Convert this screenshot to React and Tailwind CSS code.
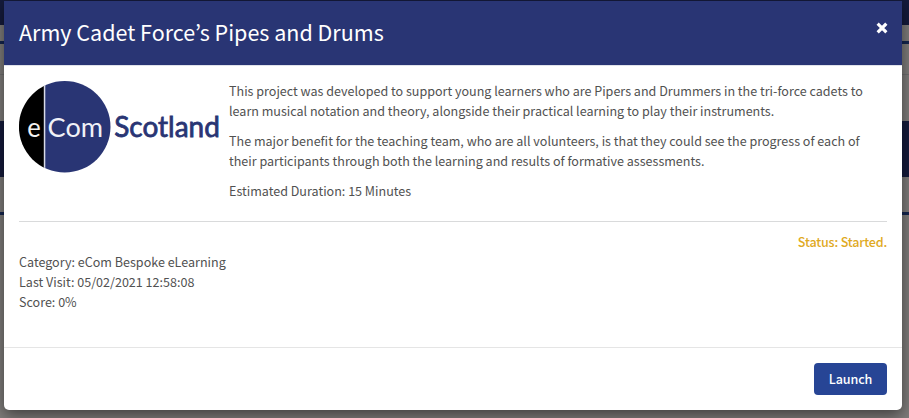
import React from "react";

function Backdrop() {
  return (
    <div className="absolute inset-0 flex flex-col bg-[#7f7d7b]" aria-hidden="true">
      <div className="h-[25px] bg-[#151b3c]" />
      <div className="h-4" />
      <div className="h-[3px] bg-[#14264f]" />
      <div className="h-[30px]" />
      <div className="h-px bg-[#6f6f6f]" />
      <div className="h-[46px]" />
      <div className="h-14 bg-[#151b3c]" />
      <div className="h-[35px]" />
      <div className="h-[3px] bg-[#14264f]" />
    </div>
  );
}

function Logo() {
  return (
    <svg width="201" height="93" viewBox="0 0 201 93" className="block shrink-0 overflow-visible" role="img" aria-label="eCom Scotland">
      <defs>
        <clipPath id="disc">
          <circle cx="45.7" cy="45.8" r="45.8" />
        </clipPath>
      </defs>
      <g clipPath="url(#disc)">
        <rect width="25" height="93" fill="#000" />
        <rect x="25" width="70" height="93" fill="#293574" />
        <rect x="24.8" width="1.5" height="93" fill="#d8dae6" />
      </g>
      <g style={{ fontFamily: 'Lato, sans-serif' }}>
        <text x="8.3" y="56" fontSize="27.5" textLength="13.5" lengthAdjust="spacingAndGlyphs" fill="#f2f2f2">e</text>
        <text x="28.6" y="56" fontSize="27.5" textLength="55.5" lengthAdjust="spacingAndGlyphs" fill="#f0f1f7">Com</text>
        <text x="95.3" y="56" fontSize="28.5" textLength="105.5" lengthAdjust="spacingAndGlyphs" fill="#293574" stroke="#293574" strokeWidth="0.8">Scotland</text>
      </g>
    </svg>
  );
}

export default function App() {
  return (
    <div className="relative h-[418px] w-[909px] overflow-hidden pt-px pl-1 font-['Noto_Sans_CJK_KR','Noto_Sans',sans-serif] text-[12.55px] leading-5 text-[#515151]">
      <Backdrop />
      <main className="relative flex h-[409px] w-[898px] flex-col overflow-visible rounded-b-[5px] bg-white shadow-[0_5px_15px_rgba(0,0,0,0.5)]">
        <header className="flex h-[65px] justify-between border-b border-[#e0e2ea] bg-[#293574] px-[15px] text-white">
          <h1 className="pt-[15px] text-[21.5px] leading-8 whitespace-nowrap">Army Cadet Force’s Pipes and Drums</h1>
          <button aria-label="Close" className="mt-[21px] -mr-px h-3 w-3">
            <svg width="12" height="12" viewBox="0 0 12 12" className="block">
              <path d="M2.8 2.8 9.2 9.2M9.2 2.8 2.8 9.2" stroke="#fff" strokeWidth="3.2" strokeLinecap="square" />
            </svg>
          </button>
        </header>
        <section className="flex h-[155px] px-[15px] pt-[15px]">
          <Logo />
          <div className="ml-[9px] space-y-2.5 whitespace-nowrap">
            <p>
              <span>This project was developed to support young learners who are Pipers and Drummers in the tri-force cadets to</span>
              <br />
              <span>learn musical notation and theory, alongside their practical learning to play their instruments.</span>
            </p>
            <p>
              <span>The major benefit for the teaching team, who are all volunteers, is that they could see the progress of each of</span>
              <br />
              <span>their participants through both the learning and results of formative assessments.</span>
            </p>
            <p>Estimated Duration: 15 Minutes</p>
          </div>
        </section>
        <section className="mx-[15px] h-[126px] border-t border-[#d9dadb] pt-2.5">
          <p className="text-right font-medium tracking-[-0.18px] text-[#dfaa1f]">Status: Started.</p>
          <p>Category: eCom Bespoke eLearning</p>
          <p>Last Visit: 05/02/2021 12:58:08</p>
          <p>Score: 0%</p>
        </section>
        <footer className="flex justify-end border-t border-[#e5e5e5] px-[15px] pt-[15px]">
          <button className="h-8 w-[73px] rounded bg-[#274595] font-medium tracking-[-0.1px] text-white">Launch</button>
        </footer>
      </main>
    </div>
  );
}
